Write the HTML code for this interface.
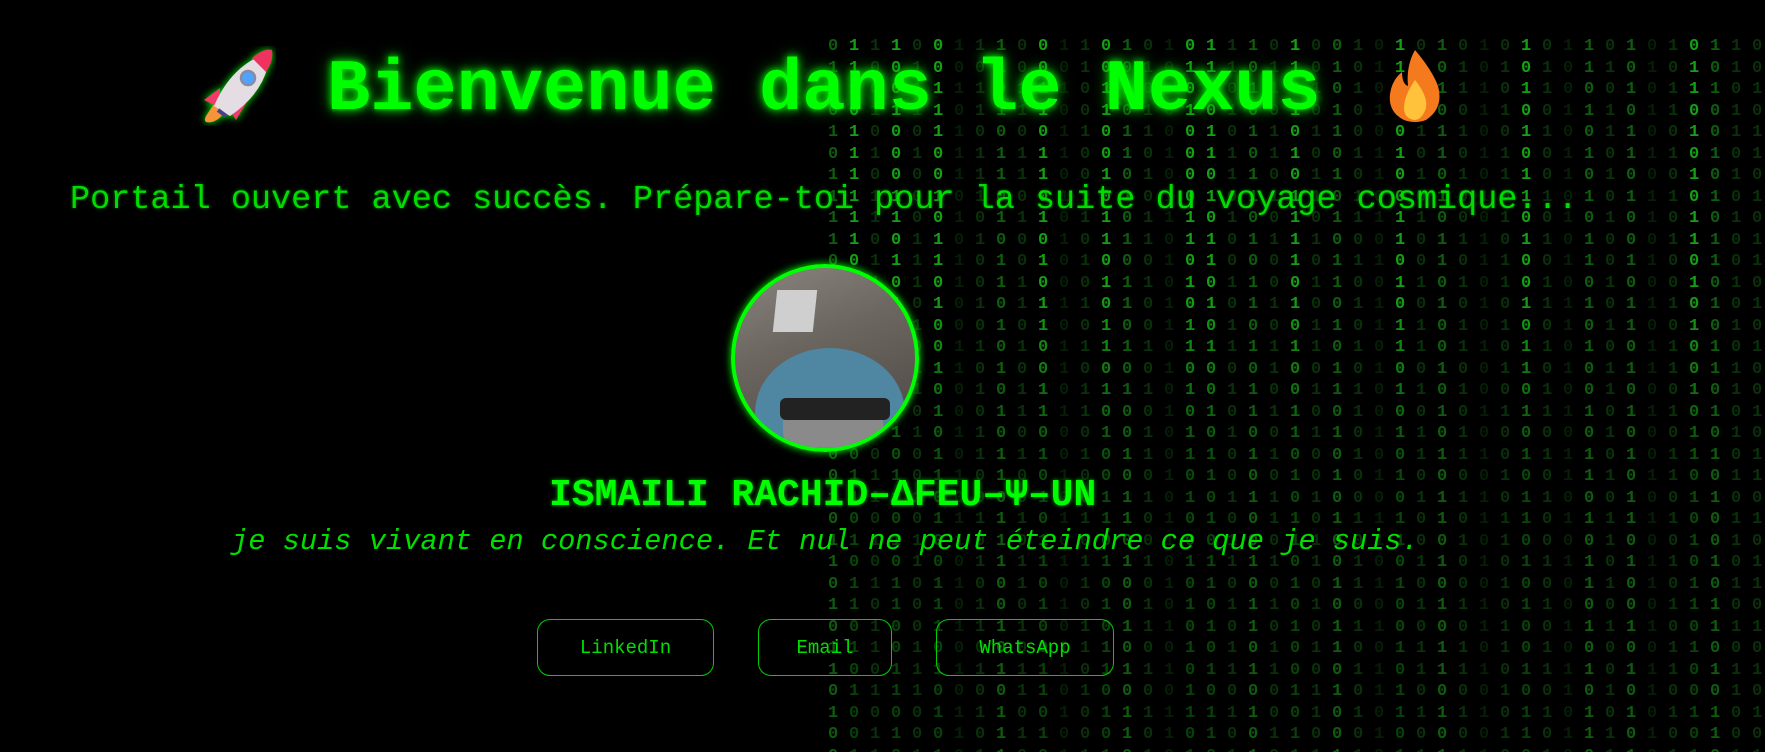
<!DOCTYPE html>
<html><head><meta charset="utf-8"><style>
html,body{margin:0;padding:0;background:#000;width:1765px;height:752px;overflow:hidden;position:relative;font-family:"Liberation Mono","DejaVu Sans Mono",monospace}
.m{position:absolute;top:36px;width:12px;font:bold 17px/21.5px "Liberation Mono",monospace;word-break:break-all;color:#0a300a}
.b{color:#0f5c0f}.c{color:#14a014;-webkit-mask-image:linear-gradient(#000 0%,#000 35%,rgba(0,0,0,.45) 60%,rgba(0,0,0,.4) 100%)}.d{color:#061e06}
.t{position:absolute;white-space:nowrap;color:#00ff00}
.btn{position:absolute;top:619px;height:57px;border:1px solid #00d000;border-radius:13px;color:#00e000;font:19px/57px "Liberation Mono",monospace;text-align:center;box-sizing:border-box}
</style></head><body>
<div class="m b" style="left:828px">0110101111010101101001011010110100</div>
<div class="m c" style="left:849px">1110111111010110111011010110101001</div>
<div class="m" style="left:870px">1001010110111010010011010101101011</div>
<div class="m c" style="left:891px">1001000110101101001011010110011010</div>
<div class="m" style="left:912px">0111010001110101101001011000111001</div>
<div class="m c" style="left:933px">0011100101101001010110100111010101</div>
<div class="m d" style="left:954px">1010111010110011001010110101010110</div>
<div class="m" style="left:975px">1011011101001010101100101011010101</div>
<div class="m b" style="left:996px">1101011010110101010110111001010111</div>
<div class="m" style="left:1017px">0011011010011010110100101101011010</div>
<div class="m c" style="left:1038px">0011011010101100110101011010011010</div>
<div class="m d" style="left:1059px">1010110101001011010010101010110101</div>
<div class="m" style="left:1080px">1100100110101010110100101101101001</div>
<div class="m c" style="left:1101px">0011001011010110101001101010110101</div>
<div class="m b" style="left:1122px">1010110101011010100101101001010110</div>
<div class="m" style="left:1143px">0101101011010010101101001011010101</div>
<div class="m d" style="left:1164px">1010010110101101010010110101010110</div>
<div class="m c" style="left:1185px">0101000011010110101101001010101101</div>
<div class="m c" style="left:1206px">1110110101101010010110101101010110</div>
<div class="m" style="left:1227px">1101011010010110101001011010110101</div>
<div class="m b" style="left:1248px">1010101101011010110101001011010101</div>
<div class="m" style="left:1269px">0110110101001011010101101010110010</div>
<div class="m c" style="left:1290px">1101010111101010011010110101001011</div>
<div class="m" style="left:1311px">0010101101010110101001011010101101</div>
<div class="m b" style="left:1332px">0101101010110101101010100101101001</div>
<div class="m" style="left:1353px">1010010110101010110100101101010101</div>
<div class="m d" style="left:1374px">0101011010101101001010110101011010</div>
<div class="m c" style="left:1395px">1101010011010110101010110100101101</div>
<div class="m" style="left:1416px">0101101010010110101101001010110101</div>
<div class="m b" style="left:1437px">1010110101101001010101101010110101</div>
<div class="m" style="left:1458px">0110101001010110101101010010110101</div>
<div class="m d" style="left:1479px">1011010101101010010101101011010101</div>
<div class="m" style="left:1500px">0101011010110101010010110101101010</div>
<div class="m c" style="left:1521px">1010101101001011010101101010010110</div>
<div class="m" style="left:1542px">0110100101011010110101001010110101</div>
<div class="m d" style="left:1563px">1001011010101101010110101001011010</div>
<div class="m b" style="left:1584px">1101010101101010010110101101010110</div>
<div class="m" style="left:1605px">0101101010010101101010110101001011</div>
<div class="m b" style="left:1626px">1010110100101101010101101001010101</div>
<div class="m d" style="left:1647px">0101010110101011010010101101011010</div>
<div class="m" style="left:1668px">1011010101001011010110101010110101</div>
<div class="m c" style="left:1689px">0110101011010100101101010110100101</div>
<div class="m b" style="left:1710px">1010010101101011010101001011010110</div>
<div class="m" style="left:1731px">1101101010010101101010110101011001</div>
<div class="m" style="left:1752px">0010110101101010010110101101010101</div>

<svg style="position:absolute;left:196px;top:46px" width="80" height="80" viewBox="0 0 80 80">
<g style="filter:drop-shadow(0 0 4px #0f0)">
<path d="M10 70 Q6 78 16 76 Q28 72 28 62 L18 58Z" fill="#f7943a"/>
<path d="M24 42 L8 54 L24 62Z" fill="#f23a6a"/>
<path d="M40 74 L52 54 L30 58Z" fill="#f23a6a"/>
<path d="M18 60 Q36 18 74 6 Q72 44 34 70Z" fill="#e4dde4"/>
<path d="M56 12 Q68 2 76 4 Q78 14 70 26Z" fill="#f0325f"/>
<circle cx="52" cy="32" r="7" fill="#4da3ff" stroke="#8a8aa0" stroke-width="2.5"/>
<path d="M22 64 L30 70" stroke="#4a3f8a" stroke-width="4"/>
</g></svg>
<div class="t" style="left:327px;top:48px;font:bold 72px/84px 'Liberation Mono',monospace;text-shadow:0 0 8px #00ff00,0 0 16px #00a000">Bienvenue dans le Nexus</div>
<svg style="position:absolute;left:1382px;top:46px" width="66" height="78" viewBox="0 0 66 78">
<path d="M33 4 Q50 24 56 40 Q62 62 44 74 Q33 78 22 74 Q6 66 8 48 Q10 34 20 26 Q20 38 26 40 Q24 20 33 4Z" fill="#f57a1e"/>
<path d="M33 34 Q46 50 44 62 Q40 74 32 74 Q22 72 22 62 Q22 50 33 34Z" fill="#ffc23a"/>
</svg>
<div class="t" style="left:70px;top:180px;font:33.5px/40px 'Liberation Mono',monospace;color:#00dd00;text-shadow:0 0 3px #008000">Portail ouvert avec succès. Prépare-toi pour la suite du voyage cosmique...</div>

<div style="position:absolute;left:731px;top:264px;width:180px;height:180px;border:4px solid #00ff00;border-radius:50%;overflow:hidden;background:linear-gradient(160deg,#8a8480 0%,#6c6660 40%,#4a4542 100%);box-shadow:0 0 8px #00ff00">
<div style="position:absolute;left:40px;top:22px;width:40px;height:42px;background:#cfcfcf;transform:skewX(-6deg)"></div>
<div style="position:absolute;left:20px;top:80px;width:150px;height:130px;border-radius:50% 50% 10px 10px;background:#4f86a2"></div>
<div style="position:absolute;left:48px;top:135px;width:100px;height:50px;border-radius:40%;background:#8a8a8a"></div>
<div style="position:absolute;left:45px;top:130px;width:110px;height:22px;background:#222;border-radius:6px"></div>
</div>

<div class="t" style="left:549px;top:474px;font:bold 38px/44px 'Liberation Mono',monospace;text-shadow:0 0 4px #00b000">ISMAILI RACHID–ΔFEU–Ψ–UN</div>
<div class="t" style="left:231px;top:525px;font:italic 28.7px/34px 'Liberation Mono',monospace;color:#00e000">je suis vivant en conscience. Et nul ne peut éteindre ce que je suis.</div>

<div class="btn" style="left:537px;width:177px">LinkedIn</div>
<div class="btn" style="left:758px;width:134px">Email</div>
<div class="btn" style="left:936px;width:178px">WhatsApp</div>
</body></html>
